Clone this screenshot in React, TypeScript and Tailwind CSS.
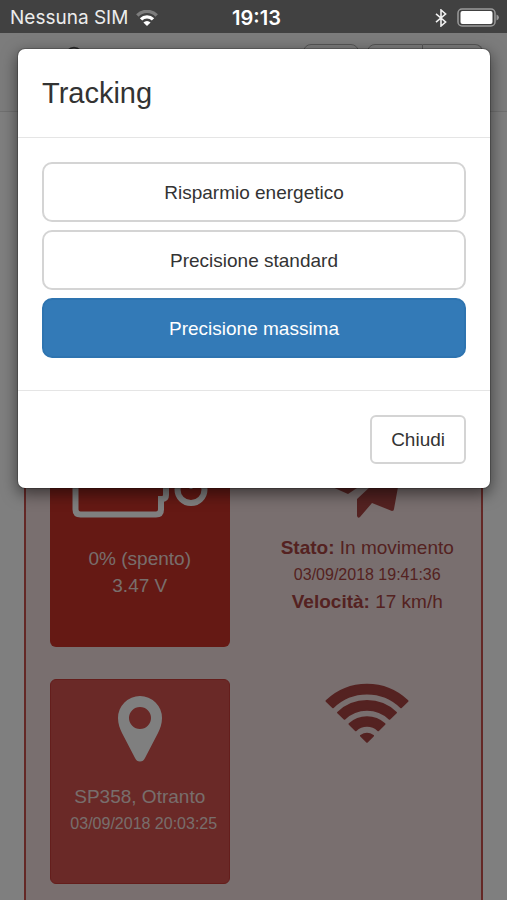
import { useState } from "react";
import { List, MapPin, Menu, Circle } from "lucide-react";

const modes = ["Risparmio energetico", "Precisione standard", "Precisione massima"];

const StatusBar = () => (
    <div className="relative z-20 grid h-[33px] grid-cols-3 items-center bg-[#414141] pt-0.5 pr-2 pl-2.5 font-['Inter','Liberation_Sans',sans-serif] text-[19px] leading-6 text-[#ececec]">
        <div className="flex items-center gap-2 whitespace-nowrap">
            <span>Nessuna SIM</span>
            <svg width="22" height="16" viewBox="0 0 22 16" fill="none" className="shrink-0">
                <path d="M1.300 5.500a13.500 13.500 0 0 1 19.400 0" stroke="#7d7d7d" strokeWidth="3.400" />
                <path d="M5 9.400a8.500 8.500 0 0 1 12 0" stroke="#fff" strokeWidth="3.400" />
                <path d="M11 16L7.400 12.500a5 5 0 0 1 7.200 0z" fill="#fff" />
            </svg>
        </div>
        <span className="pl-1 text-center text-xl leading-6 font-semibold text-white">19:13</span>
        <div className="flex items-center justify-end gap-2.5">
            <svg width="12" height="18" viewBox="0 0 12 18" fill="none" stroke="#f0f0f0" strokeWidth="1.6">
                <path d="M1 4.8l9.6 8.2L6 17V1l4.6 4L1 13.2" />
            </svg>
            <svg width="42" height="19" viewBox="0 0 42 19">
                <rect x="1" y="1" width="37" height="17" rx="4" fill="none" stroke="#9a9a9a" strokeWidth="1.5" />
                <rect x="3.500" y="3" width="32" height="13" rx="2" fill="#fff" />
                <path d="M39.500 6.500q2.500 1 2.500 3t-2.500 3z" fill="#9a9a9a" />
            </svg>
        </div>
    </div>
);

const BatteryIcon = () => (
    <svg width="136" height="60" viewBox="0 0 136 60" fill="none" stroke="#fff" strokeWidth="6">
        <path d="M8.500 3H84q5 0 5 5v11q5 0 5 4v14q0 4-4 4h-1v10.500q0 5-5 5H8.500q-5 0-5-5V8q0-5 5-5z" />
        <circle cx="119" cy="31.500" r="13.500" />
        <path d="M119 12v19" strokeWidth="3" />
    </svg>
);

const MovingIcon = () => (
    <svg width="84" height="60" viewBox="0 0 84 60" fill="currentColor">
        <path d="M79 0L5 28l18 8 12-8z" />
        <path d="M80 0L46 28 32 41v17q1 3 3 1l12-14 20 8q2 0 2-2l4-22z" />
    </svg>
);

const PinIcon = () => (
    <svg width="44" height="66" viewBox="0 0 44 66" fill="#fff">
        <path
            fillRule="evenodd"
            d="M22 0a22 22 0 0 1 22 22c0 6-2 11-4 15L27 62q-1.600 3.500-5 3.500T17 62L4 37C2 33 0 28 0 22A22 22 0 0 1 22 0zm0 11a11 11 0 1 0 0 22 11 11 0 0 0 0-22z"
        />
    </svg>
);

const WifiIcon = () => (
    <svg width="84" height="60" viewBox="0 0 84 60" fill="currentColor" stroke="currentColor" strokeWidth="2" strokeLinejoin="round">
        <path d="M1.500 18A58.500 58.500 0 0 1 82.500 18L76 24.300A49 49 0 0 0 8 24.300z" />
        <path d="M13 29.600A42 42 0 0 1 71 29.600L64.500 35.800A32.500 32.500 0 0 0 19.500 35.800z" />
        <path d="M24.500 41A26 26 0 0 1 59.500 41L53.200 47.200A16.500 16.500 0 0 0 30.800 47.200z" />
        <path d="M36 52.800Q42 48.600 48 52.800L42 58.800z" />
    </svg>
);

const Background = () => (
    <div>
        <header className="flex h-[79px] items-start justify-between border-b border-[#e0e0e0] bg-[#f8f8f8] px-6 pt-[11px]">
            <Circle className="mt-0.5 ml-10" size={20} color="#555" />
            <div className="flex gap-2">
                <button aria-label="Mappa" className="flex h-12 w-14 items-center justify-center rounded-lg border border-[#aaa]">
                    <MapPin size={20} />
                </button>
                <div className="flex">
                    <button aria-label="Elenco" className="flex h-12 w-14 items-center justify-center rounded-l-lg border border-[#aaa]">
                        <List size={20} />
                    </button>
                    <button aria-label="Menu" className="flex h-12 w-15 items-center justify-center rounded-r-lg border border-l-0 border-[#aaa]">
                        <Menu size={20} />
                    </button>
                </div>
            </div>
        </header>

        <main className="px-6 pt-6">
            <div className="border-2 border-[#c9504c] bg-[#f2dede] px-6 pt-76 pb-8 text-center text-[19px] leading-[27px] text-[#a94442]">
                <div className="grid grid-cols-2 gap-x-12 gap-y-8">
                    <section className="h-[205px] rounded-md bg-[#ca3228] text-[#f0dcd8]">
                        <div className="flex h-[103px] justify-center pt-4">
                            <BatteryIcon />
                        </div>
                        <p>0% (spento)</p>
                        <p>3.47 V</p>
                    </section>
                    <section className="h-[205px]">
                        <div className="flex h-[92px] justify-center pt-4">
                            <MovingIcon />
                        </div>
                        <p className="whitespace-nowrap"><strong>Stato:</strong> In movimento</p>
                        <p className="text-base leading-[27px]">03/09/2018 19:41:36</p>
                        <p><strong>Velocità:</strong> 17 km/h</p>
                    </section>
                    <section className="h-[205px] rounded-md border border-[#c93c38] bg-[#d4524e] text-[#f0dcd8]">
                        <div className="flex h-[103px] justify-center pt-4">
                            <PinIcon />
                        </div>
                        <p>SP358, Otranto</p>
                        <p className="pl-2 text-base leading-[27px] whitespace-nowrap">03/09/2018 20:03:25</p>
                    </section>
                    <section className="flex h-[205px] justify-center pt-1">
                        <WifiIcon />
                    </section>
                </div>
            </div>
        </main>
    </div>
);

export default function App() {
    const [mode, setMode] = useState(modes[2]);

    return (
        <div className="relative h-screen overflow-hidden bg-white font-['Liberation_Sans',Arial,sans-serif]">
            <StatusBar />
            <Background />

            <div className="absolute inset-0 z-10 bg-black/50 pt-12 pr-4 pl-[17px]">
                <div
                    role="dialog"
                    aria-labelledby="tracking-title"
                    className="rounded-lg border border-black/20 bg-white bg-clip-padding text-[19px] leading-[27px] text-[#333] shadow-[0_5px_15px_rgba(0,0,0,0.5)]"
                >
                    <div className="border-b border-[#e5e5e5] px-6 py-6">
                        <h4 id="tracking-title" className="text-[29px] leading-10 font-medium">Tracking</h4>
                    </div>
                    <div className="px-6 pt-6 pb-6">
                        {
                            modes.map(name => (
                                <button
                                    key={name}
                                    type="button"
                                    onClick={() => setMode(name)}
                                    className={`mb-2 block h-15 w-full rounded-[10px] border-2 ${name === mode ? "border-[#2e74b0] bg-[#337ab7] text-white" : "border-[#d4d4d4] bg-white"}`}
                                >
                                    {name}
                                </button>
                            ))
                        }
                    </div>
                    <div className="flex justify-end border-t border-[#e5e5e5] p-6">
                        <button type="button" className="h-[49px] rounded-md border-2 border-[#d4d4d4] px-[19px]">Chiudi</button>
                    </div>
                </div>
            </div>
        </div>
    );
}
